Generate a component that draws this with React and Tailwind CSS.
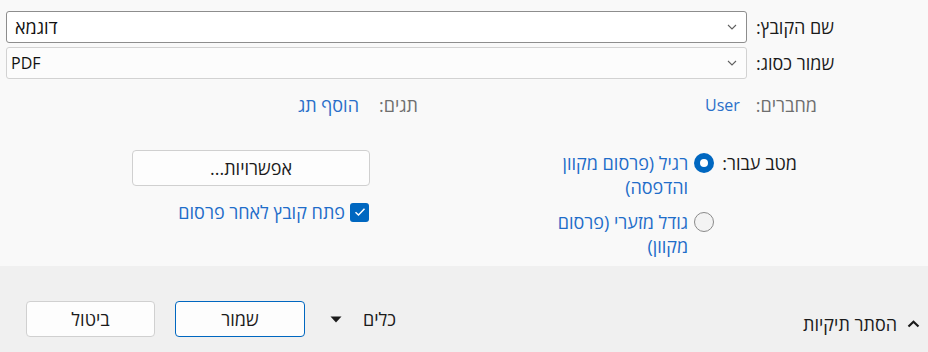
import React from "react";

const font = { fontFamily: '"Open Sans", "Liberation Sans", "DejaVu Sans", sans-serif' };

function Chevron() {
  return (
    <svg width="10" height="6" viewBox="0 0 10 6" className="shrink-0">
      <path d="M1 1 L5 5 L9 1" fill="none" stroke="#606060" strokeWidth="1.1" />
    </svg>
  );
}

function Field({ label, value, latin, active }) {
  return (
    <div className="flex h-[32px] items-center gap-[9px] pl-[6px] pr-[86px]">
      <div className="w-[86px] whitespace-nowrap text-left text-[18px] leading-[24px] text-[#1b1b1b]">{label}</div>
      <div
        className={
          "flex h-[32px] flex-1 flex-row-reverse items-center justify-between rounded-[3px] border pl-[4px] pr-[9px] " +
          (active ? "border-[#8d8d8d] bg-white" : "border-[#d2d2d2] bg-[#fcfcfc]")
        }
      >
        <span className={"block whitespace-nowrap text-[#111] " + (latin ? "text-[16px]" : "pl-[4px] text-[18px]")}>
          <bdi>{value}</bdi>
        </span>
        <Chevron />
      </div>
    </div>
  );
}

export default function App() {
  return (
    <div dir="rtl" style={font} className="flex h-[352px] w-[928px] flex-col overflow-hidden text-[18px]">
      <div className="h-[266px] bg-[#f9f9f9] pt-[11px]">
        <Field label="שם הקובץ:" value="דוגמא" active />
        <div className="mt-[4px]">
          <Field label="שמור כסוג:" value="PDF" latin />
        </div>

        <div className="mt-[14px] flex items-center pr-[111px] leading-[24px]">
          <div className="flex w-[399px] items-center gap-[16px]">
            <span className="text-[#6f6f6f]">מחברים:</span>
            <span className="text-[16px] text-[#2a6fc9]">User</span>
          </div>
          <div className="flex gap-[20px]">
            <span className="text-[#6f6f6f]">תגים:</span>
            <span className="text-[#2a6fc9]">הוסף תג</span>
          </div>
        </div>

        <div className="mt-[33px] flex items-start justify-between pl-[132px] pr-[131px] leading-[24px]">
          <div className="flex items-start gap-[8px] pt-[1px]">
            <span className="text-[#1b1b1b]">מטב עבור:</span>
            <div className="flex flex-col gap-[11px]">
              <div className="flex items-start gap-[6px]">
                <span className="mt-[2px] flex h-[20px] w-[20px] shrink-0 items-center justify-center rounded-full bg-[#0067c0]">
                  <span className="h-[8px] w-[8px] rounded-full bg-white" />
                </span>
                <span className="text-[#1f6dc9]">
                  רגיל (פרסום מקוון
                  <br />
                  והדפסה)
                </span>
              </div>
              <div className="flex items-start gap-[6px]">
                <span className="mt-[2px] h-[20px] w-[20px] shrink-0 rounded-full border border-[#8a8a8a] bg-[#f3f3f3]" />
                <span className="text-[#1f6dc9]">
                  גודל מזערי (פרסום
                  <br />
                  מקוון)
                </span>
              </div>
            </div>
          </div>

          <div className="flex flex-col items-start">
            <button className="flex h-[36px] w-[238px] items-center justify-center rounded-[4px] border border-[#d0d0d0] bg-[#fdfdfd] text-[18px] text-[#1b1b1b]">
              אפשרויות...
            </button>
            <div className="mt-[14px] flex items-center gap-[5px] pr-[1px]">
              <span className="flex h-[19px] w-[19px] items-center justify-center rounded-[3px] bg-[#0067c0]">
                <svg width="12" height="10" viewBox="0 0 12 10">
                  <path d="M1.5 5.2 L4.5 8 L10.5 1.8" fill="none" stroke="white" strokeWidth="1.5" />
                </svg>
              </span>
              <span className="text-[#1f6dc9]">פתח קובץ לאחר פרסום</span>
            </div>
          </div>
        </div>
      </div>

      <div className="flex h-[86px] items-start justify-between bg-[#f0f0f0] pl-[26px] pr-[8px] leading-[24px]">
        <div className="mt-[46px] flex items-center gap-[10px]">
          <svg width="13" height="8" viewBox="0 0 13 8">
            <path d="M1.5 6.5 L6.5 1.8 L11.5 6.5" fill="none" stroke="#1b1b1b" strokeWidth="2.2" />
          </svg>
          <span className="text-[#1b1b1b]">הסתר תיקיות</span>
        </div>
        <div className="mt-[35px] flex items-center">
          <div className="flex items-center gap-[21px] pl-[25px]">
            <span className="text-[#1b1b1b]">כלים</span>
            <svg width="12" height="7" viewBox="0 0 12 7">
              <path d="M0.5 0.5 L11.5 0.5 L6 6.5 Z" fill="#1b1b1b" />
            </svg>
          </div>
          <button className="flex h-[36px] w-[130px] items-center justify-center rounded-[4px] border border-[#0067c0] bg-[#fdfdfd] text-[#1b1b1b]">
            שמור
          </button>
          <button className="mr-[20px] flex h-[36px] w-[129px] items-center justify-center rounded-[4px] border border-[#d0d0d0] bg-[#fdfdfd] text-[#1b1b1b]">
            ביטול
          </button>
        </div>
      </div>
    </div>
  );
}
